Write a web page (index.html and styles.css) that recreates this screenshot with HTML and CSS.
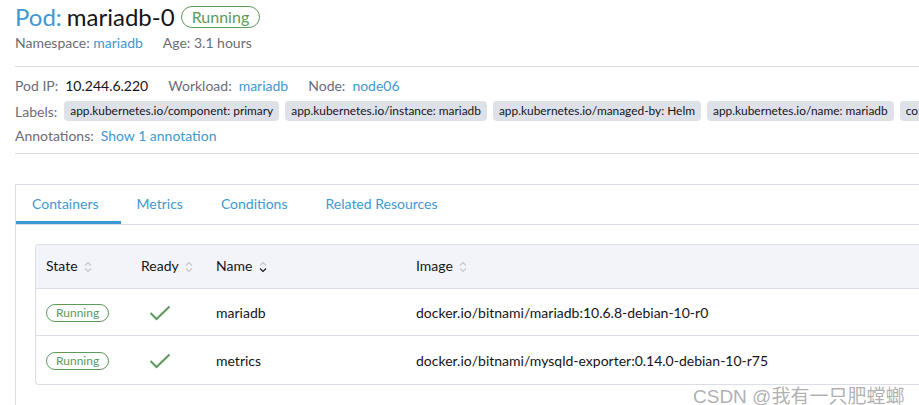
FILE: index.html
```html
<!DOCTYPE html>
<html>
<head>
<meta charset="utf-8">
<link rel="stylesheet" href="styles.css">
</head>
<body>
<div class="page">
  <header class="head">
    <h1 class="title"><span class="kind">Pod:</span> mariadb-0 <span class="badge">Running</span></h1>
    <div class="sub">
      <span>Namespace: <a class="link">mariadb</a></span>
      <span>Age: <span class="val-plain">3.1 hours</span></span>
    </div>
  </header>
  <section class="meta">
    <div class="row first">
      <span class="lbl">Pod IP:</span><span class="val">10.244.6.220</span>
      <span class="lbl">Workload:</span><a class="link">mariadb</a>
      <span class="lbl">Node:</span><a class="link">node06</a>
    </div>
    <div class="row labels">
      <span class="lbl">Labels:</span>
      <span class="chip">app.kubernetes.io/component: primary</span>
      <span class="chip">app.kubernetes.io/instance: mariadb</span>
      <span class="chip">app.kubernetes.io/managed-by: Helm</span>
      <span class="chip">app.kubernetes.io/name: mariadb</span>
      <span class="chip">co</span>
    </div>
    <div class="row annot">
      <span class="lbl">Annotations:</span><a class="link">Show 1 annotation</a>
    </div>
  </section>
  <section class="tabs-box">
    <nav class="tabs">
      <span class="tab active">Containers</span>
      <span class="tab">Metrics</span>
      <span class="tab">Conditions</span>
      <span class="tab">Related Resources</span>
    </nav>
    <div class="tab-body">
      <table class="grid">
        <thead>
          <tr>
            <th class="c-state">State <svg class="sort" viewBox="0 0 8 12"><path d="M1 4.5 L4 1.5 L7 4.5 M1 7.5 L4 10.5 L7 7.5" /></svg></th>
            <th class="c-ready">Ready <svg class="sort" viewBox="0 0 8 12"><path d="M1 4.5 L4 1.5 L7 4.5 M1 7.5 L4 10.5 L7 7.5" /></svg></th>
            <th class="c-name">Name <svg class="sort" viewBox="0 0 8 12"><path d="M1 4.5 L4 1.5 L7 4.5" /><path class="on" d="M1 7.5 L4 10.5 L7 7.5" /></svg></th>
            <th class="c-image">Image <svg class="sort" viewBox="0 0 8 12"><path d="M1 4.5 L4 1.5 L7 4.5 M1 7.5 L4 10.5 L7 7.5" /></svg></th>
          </tr>
        </thead>
        <tbody>
          <tr>
            <td><span class="badge sm">Running</span></td>
            <td><svg class="check" viewBox="0 0 22 16"><path d="M1.5 8 L7.5 14 L20.5 1.5" /></svg></td>
            <td>mariadb</td>
            <td>docker.io/bitnami/mariadb:10.6.8-debian-10-r0</td>
          </tr>
          <tr>
            <td><span class="badge sm">Running</span></td>
            <td><svg class="check" viewBox="0 0 22 16"><path d="M1.5 8 L7.5 14 L20.5 1.5" /></svg></td>
            <td>metrics</td>
            <td>docker.io/bitnami/mysqld-exporter:0.14.0-debian-10-r75</td>
          </tr>
        </tbody>
      </table>
    </div>
  </section>
</div>
<div class="watermark">CSDN @我有一只肥螳螂</div>
</body>
</html>
```
FILE: styles.css
```css
* { box-sizing: border-box; }
html, body { margin: 0; padding: 0; background: #fff; overflow: hidden; }
body {
  font-family: Lato, "Noto Sans", sans-serif;
  color: #141419;
  font-size: 14px;
  width: 919px;
  height: 405px;
  position: relative;
}
.page { padding-left: 15px; }
.link { color: #3d98d3; text-decoration: none; }

.head { padding-top: 2px; }
.title {
  margin: 0;
  font-size: 24px;
  font-weight: 400;
  line-height: 30px;
  height: 30px;
  display: flex;
  align-items: center;
  gap: 5px;
  color: #141419;
}
.kind { color: #3d98d3; }
.badge {
  display: inline-flex;
  align-items: center;
  justify-content: center;
  border: 1px solid #5d995d;
  color: #5d995d;
  border-radius: 12px;
  font-size: 16px;
  height: 22px;
  line-height: 1;
  padding: 0 10px;
  margin-left: 1px;
}
.sub {
  display: flex;
  gap: 20px;
  color: #6c6c76;
  margin-top: 2px;
  line-height: 18px;
}
.val-plain { color: #6c6c76; }

.meta {
  margin-top: 14px;
  border-top: 1px solid #dcdee7;
  border-bottom: 1px solid #dcdee7;
  padding: 6px 0 7px;
}
.row {
  display: flex;
  align-items: center;
  white-space: nowrap;
  height: 24px;
  color: #6c6c76;
}
.row.first { height: 25px; padding-bottom: 1px; }
.row .lbl { margin-right: 7px; }
.row .val { color: #141419; margin-right: 20px; }
.row .link { margin-right: 20px; }
.labels { height: 26px; overflow: hidden; }
.annot { height: 22px; }
.chip {
  background: #dfe1e8;
  color: #141419;
  border-radius: 4px;
  height: 20px;
  line-height: 20px;
  padding: 0 6px;
  font-size: 11.9px;
  margin-right: 6px;
  flex-shrink: 0;
}

.tabs-box {
  margin-top: 30px;
  border-top: 1px solid #dcdee7;
  border-left: 1px solid #dcdee7;
}
.tabs {
  display: flex;
  height: 40px;
  border-bottom: 1px solid #dcdee7;
}
.tab {
  color: #3d98d3;
  padding: 0 22px 3px 16px;
  display: flex;
  align-items: center;
  font-size: 14px;
}
.tab.active {
  box-shadow: inset 0 -3px 0 #3d98d3;
}
.tab-body { padding: 19px 0 20px 19px; }

.grid {
  width: 100%;
  border-collapse: separate;
  border-spacing: 0;
  border: 1px solid #dcdee7;
  border-right: none;
  border-radius: 4px 0 0 4px;
}
.grid th {
  background: #f3f4f9;
  font-weight: 400;
  text-align: left;
  height: 44px;
  padding: 0 10px 3px;
  border-bottom: 1px solid #dcdee7;
  white-space: nowrap;
  font-size: 14px;
}
.grid th:first-child { border-top-left-radius: 4px; }
.grid td {
  height: 48px;
  padding: 0 10px;
  border-bottom: 1px solid #dcdee7;
  white-space: nowrap;
  font-size: 14px;
}
.grid tbody tr:first-child td { height: 47px; }
.grid tbody tr:last-child td { border-bottom: none; }
.c-state { width: 95px; }
.c-ready { width: 75px; }
.c-name { width: 200px; }
.sort {
  width: 8px;
  height: 12px;
  vertical-align: -2px;
  margin-left: 3px;
  fill: none;
  stroke: #c4c6cf;
  stroke-width: 1.1;
}
.sort .on { stroke: #141419; }
.badge.sm {
  font-size: 12px;
  height: 18px;
  border-radius: 9px;
  padding: 0 9px;
  margin-left: 0;
}
.check {
  width: 22px;
  height: 16px;
  margin-left: 8px;
  fill: none;
  stroke: #5d995d;
  stroke-width: 2;
  vertical-align: middle;
}

.watermark {
  position: absolute;
  left: 693px;
  top: 381px;
  font-family: "Liberation Sans", "Noto Sans CJK SC", sans-serif;
  font-size: 19px;
  color: rgba(150, 150, 150, 0.75);
  white-space: nowrap;
}
```
